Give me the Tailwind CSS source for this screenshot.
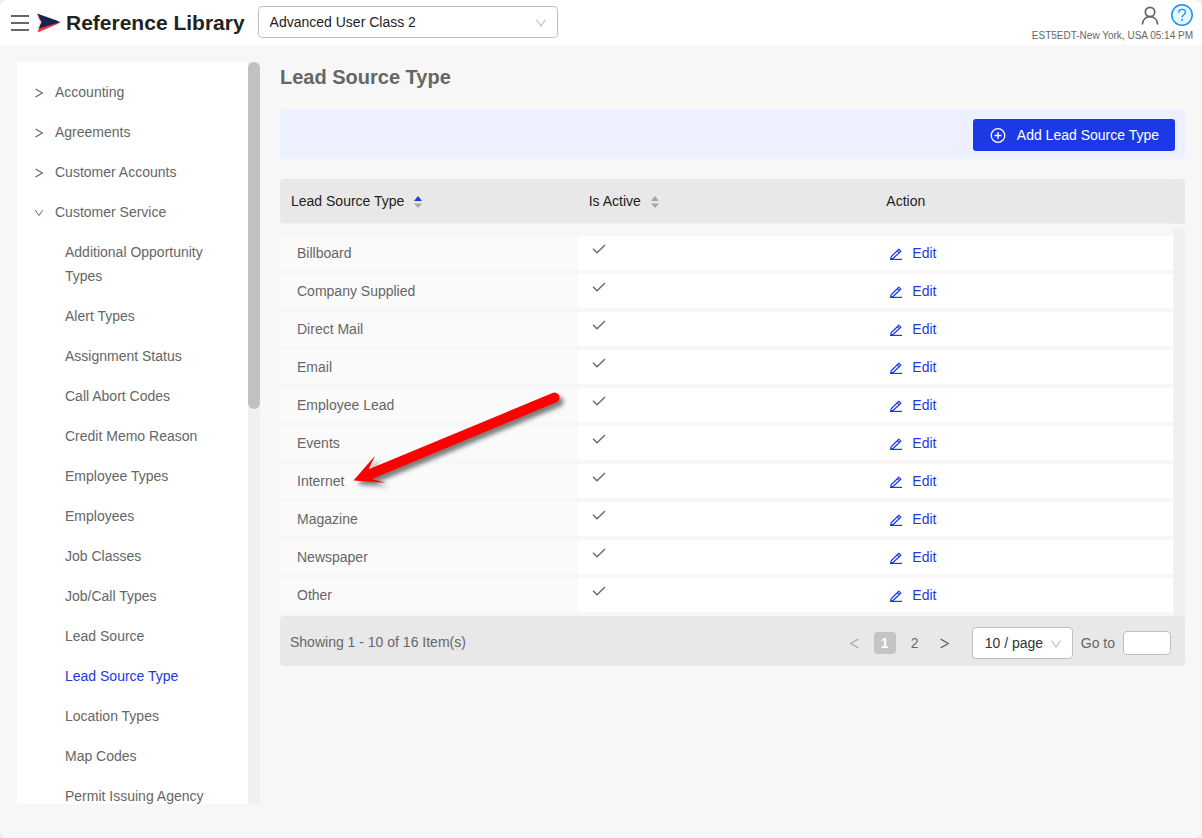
<!DOCTYPE html>
<html lang="en">
<head>
<meta charset="utf-8">
<meta name="viewport" content="width=device-width, initial-scale=1">
<title>Reference Library</title>
<script src="https://cdn.jsdelivr.net/npm/@tailwindcss/browser@4"></script>
</head>
<body class="bg-[#ededed] font-['Liberation_Sans',Arial,sans-serif] text-sm text-[#666]">
<svg class="hidden" aria-hidden="true">
  <symbol id="right" viewBox="0 0 10 10"><path d="M1.500 1 8.500 5 1.500 9" fill="none" stroke="currentColor" stroke-width="1.100"/></symbol>
  <symbol id="down" viewBox="0 0 12 12"><path d="M1.500 2.500 6 9l4.500-6.500" fill="none" stroke="currentColor" stroke-width="1.200"/></symbol>
  <symbol id="check" viewBox="0 0 14 14"><path d="M1 6.800 5 10.800l8-7.800" fill="none" stroke="currentColor" stroke-width="1.300"/></symbol>
  <symbol id="edit" viewBox="0 0 12 12"><path d="M1.200 8.700 8.800 1.200l2 2L3.300 10.300.8 10.800ZM7.200 2.700l2 2" fill="none" stroke="currentColor" stroke-width="1.200" stroke-linejoin="round"/><path d="M0 11.400h12" stroke="currentColor" stroke-width="1.200"/></symbol>
</svg>
<div class="flex h-screen flex-col overflow-hidden rounded-lg bg-[#f7f7f7]">
  <header class="flex h-[45px] shrink-0 items-center bg-white pr-[9px] pl-[11px]">
    <button type="button" aria-label="Menu" class="text-[#666]">
      <svg class="h-[18px] w-[18px]" viewBox="0 0 18 18" fill="none" stroke="currentColor" stroke-width="2"><path d="M0 2h18M0 9h18M0 16h18"/></svg>
    </button>
    <svg class="ml-2 h-5 w-6" viewBox="0 0 24 20" aria-hidden="true">
      <path d="M.5 3.500 4 9 .5 19.500 24 9.500Z" fill="#ff2b3d"/>
      <path d="M0 .5 24 9 1.500 15.600 5 9Z" fill="#14244f"/>
      <path d="M.4 2.500 3.200 9 .4 18.500M21 8l3 1-3 1.800" fill="none" stroke="#b9e4ec" stroke-width=".8"/>
    </svg>
    <h1 class="ml-[5px] text-[21px] font-bold text-[#222]">Reference Library</h1>
    <div class="relative ml-[13px] mb-[2px] w-[300px]">
      <select aria-label="User class" class="block h-8 w-full appearance-none rounded border border-[#bfbfbf] bg-white pr-8 pl-[11px] text-[#222]"><option>Advanced User Class 2</option></select>
      <svg class="pointer-events-none absolute top-[11px] right-[11px] h-3 w-3 text-[#bfbfbf]"><use href="#down"/></svg>
    </div>
    <div class="ml-auto flex flex-col items-end">
      <div class="flex items-center gap-3">
        <button type="button" aria-label="Account"><svg class="h-5 w-[18px]" viewBox="0 0 18 20" fill="none" stroke="#666" stroke-width="1.700"><circle cx="9" cy="7" r="4.700"/><path d="M1.300 19.500c.4-4.700 3.500-7.800 7.700-7.800s7.300 3.100 7.700 7.800"/></svg></button>
        <button type="button" aria-label="Help"><svg class="h-[22px] w-[22px]" viewBox="0 0 22 22" fill="none" stroke="#1890ff"><circle cx="11" cy="11" r="10.200" fill="#e6f7ff" stroke-width="1.500"/><path d="M7.700 8.700c0-2 1.400-3.300 3.300-3.300s3.400 1.200 3.400 3c0 2.300-3.300 2.400-3.300 5" stroke-width="1.400"/><path d="M10.200 15.900h1.700" stroke-width="1.600"/></svg></button>
      </div>
      <span class="mt-1 text-[10px] leading-3">EST5EDT-New York, USA 05:14 PM</span>
    </div>
  </header>
  <div class="flex min-h-0 flex-1 gap-5 p-[17px] pb-[34px]">
    <aside class="flex w-[243px] shrink-0 overflow-hidden bg-white">
      <nav aria-label="Reference sections" class="flex-1 overflow-hidden pt-[10px] leading-6">
        <button type="button" aria-expanded="false" class="flex w-full items-center gap-[11px] py-2 pl-[17px]"><svg class="mt-[2px] h-[10px] w-[10px]"><use href="#right"/></svg>Accounting</button>
        <button type="button" aria-expanded="false" class="flex w-full items-center gap-[11px] py-2 pl-[17px]"><svg class="mt-[2px] h-[10px] w-[10px]"><use href="#right"/></svg>Agreements</button>
        <button type="button" aria-expanded="false" class="flex w-full items-center gap-[11px] py-2 pl-[17px]"><svg class="mt-[2px] h-[10px] w-[10px]"><use href="#right"/></svg>Customer Accounts</button>
        <button type="button" aria-expanded="true" class="flex w-full items-center gap-[11px] py-2 pl-[17px]"><svg class="mt-[2px] h-[10px] w-[10px]"><use href="#down"/></svg>Customer Service</button>
        <a href="#" class="block py-2 pr-8 pl-12">Additional Opportunity Types</a>
        <a href="#" class="block py-2 pl-12">Alert Types</a>
        <a href="#" class="block py-2 pl-12">Assignment Status</a>
        <a href="#" class="block py-2 pl-12">Call Abort Codes</a>
        <a href="#" class="block py-2 pl-12">Credit Memo Reason</a>
        <a href="#" class="block py-2 pl-12">Employee Types</a>
        <a href="#" class="block py-2 pl-12">Employees</a>
        <a href="#" class="block py-2 pl-12">Job Classes</a>
        <a href="#" class="block py-2 pl-12">Job/Call Types</a>
        <a href="#" class="block py-2 pl-12">Lead Source</a>
        <a href="#" aria-current="page" class="block py-2 pl-12 text-[#1d39e6]">Lead Source Type</a>
        <a href="#" class="block py-2 pl-12">Location Types</a>
        <a href="#" class="block py-2 pl-12">Map Codes</a>
        <a href="#" class="block py-2 pl-12">Permit Issuing Agency</a>
      </nav>
      <div class="w-3 shrink-0 bg-[#f0f0f0]"><div class="h-[347px] rounded-full bg-[#c1c1c1]"></div></div>
    </aside>
    <main class="min-w-0 flex-1">
      <h2 class="text-xl leading-[30px] font-bold text-[#666]">Lead Source Type</h2>
      <div class="mt-[17px] flex justify-end rounded bg-[#edf0ff] px-[10px] pt-[10px] pb-2">
        <button type="button" class="flex h-8 items-center gap-[11px] rounded-[3px] bg-[#1d39e6] pr-4 pl-[17px] text-white">
          <svg class="h-4 w-4" viewBox="0 0 16 16" fill="none" stroke="currentColor" stroke-width="1.300"><circle cx="8" cy="8.500" r="6.800"/><path d="M8 5v7M4.500 8.500h7" stroke-width="1.400"/></svg>
          Add Lead Source Type
        </button>
      </div>
      <div class="relative mt-5">
        <table class="w-full table-fixed border-separate border-spacing-0 text-left">
          <colgroup><col><col><col><col class="w-3"></colgroup>
          <thead class="text-[#222]">
            <tr class="h-[45px]">
              <th scope="col" class="rounded-l border-b border-[#f0f0f0] bg-[#e8e8e8] px-[11px] font-normal"><button type="button" class="flex items-center gap-[10px]">Lead Source Type<svg class="mt-[2px] h-3 w-2" viewBox="0 0 8 12"><path d="M4 0 8 5H0Z" fill="#1d39e6"/><path d="M4 12 0 7.500h8Z" fill="#a6a6a6"/></svg></button></th>
              <th scope="col" class="border-b border-[#f0f0f0] bg-[#e8e8e8] px-[11px] font-normal"><button type="button" class="flex items-center gap-[10px]">Is Active<svg class="mt-[2px] h-3 w-2" viewBox="0 0 8 12"><path d="M4 0 8 5H0Z" fill="#a6a6a6"/><path d="M4 12 0 7.500h8Z" fill="#a6a6a6"/></svg></button></th>
              <th scope="col" class="border-b border-[#f0f0f0] bg-[#e8e8e8] px-[11px] font-normal">Action</th>
              <td class="rounded-r border-b border-l border-[#ebebeb] bg-[#e8e8e8]"></td>
            </tr>
          </thead>
          <tbody id="rows">
            <tr class="h-1"><td colspan="4"></td></tr>
            <tr class="h-2"><td colspan="3"></td><td class="bg-[#f0f0f0]"></td></tr>
          </tbody>
        </table>
        <div class="flex h-[50px] items-center rounded bg-[#e8e8e8] pr-[14px] pl-[10px]">
          <span class="pt-[2px]">Showing 1 - 10 of 16 Item(s)</span>
          <nav aria-label="Pagination" class="ml-auto flex items-center gap-2 pt-1">
            <button type="button" aria-label="Previous page" class="flex h-[22px] w-[22px] items-center justify-center text-[#aaa]"><svg class="h-[11px] w-[11px] rotate-180"><use href="#right"/></svg></button>
            <button type="button" aria-current="page" class="h-[22px] w-[22px] rounded bg-[#c4c4c4] font-bold text-white">1</button>
            <button type="button" class="h-[22px] w-[22px]">2</button>
            <button type="button" aria-label="Next page" class="flex h-[22px] w-[22px] items-center justify-center"><svg class="h-[11px] w-[11px]"><use href="#right"/></svg></button>
            <div class="relative ml-2 w-[101px]">
              <select aria-label="Page size" class="block h-8 w-full appearance-none rounded border border-[#bfbfbf] bg-white pl-3 text-[#333]"><option>10 / page</option></select>
              <svg class="pointer-events-none absolute top-[11px] right-[11px] h-3 w-3 text-[#bfbfbf]"><use href="#down"/></svg>
            </div>
            <label for="goto">Go to</label>
            <input id="goto" type="text" class="h-6 w-12 rounded border border-[#bfbfbf] bg-white px-2">
          </nav>
        </div>
        <svg class="pointer-events-none absolute top-[206px] left-[70px] h-[110px] w-[220px] drop-shadow-[4px_4px_2px_rgba(0,0,0,0.5)]" viewBox="350 385 220 110" aria-hidden="true"><path d="M353.500 480.500 375 455.700 368.700 469.300 552.500 393A5 5 0 0 1 556.500 402.200L372 479 386 482.700Z" fill="#f00"/></svg>
      </div>
    </main>
  </div>
</div>
<template id="row">
  <tr class="h-[38px]">
    <td class="border-b-4 border-[#f7f7f7] bg-[#fafafa] pl-[17px]"></td>
    <td class="border-b-4 border-[#f7f7f7] bg-white pl-[14px]"><svg role="img" aria-label="Active" class="mb-2 h-[14px] w-[14px]"><use href="#check"/></svg></td>
    <td class="border-b-4 border-[#f7f7f7] bg-white pl-[15px]"><a href="#" class="flex items-center gap-[10px] text-[#1d39e6]"><svg class="mt-[2px] h-3 w-3"><use href="#edit"/></svg>Edit</a></td>
    <td class="bg-[#f0f0f0]"></td>
  </tr>
</template>
<script>
  const names = ["Billboard", "Company Supplied", "Direct Mail", "Email", "Employee Lead", "Events", "Internet", "Magazine", "Newspaper", "Other"];
  const body = document.getElementById("rows");
  for (const name of names) {
    const row = document.getElementById("row").content.cloneNode(true);
    row.querySelector("td").textContent = name;
    body.append(row);
  }
</script>
</body>
</html>
